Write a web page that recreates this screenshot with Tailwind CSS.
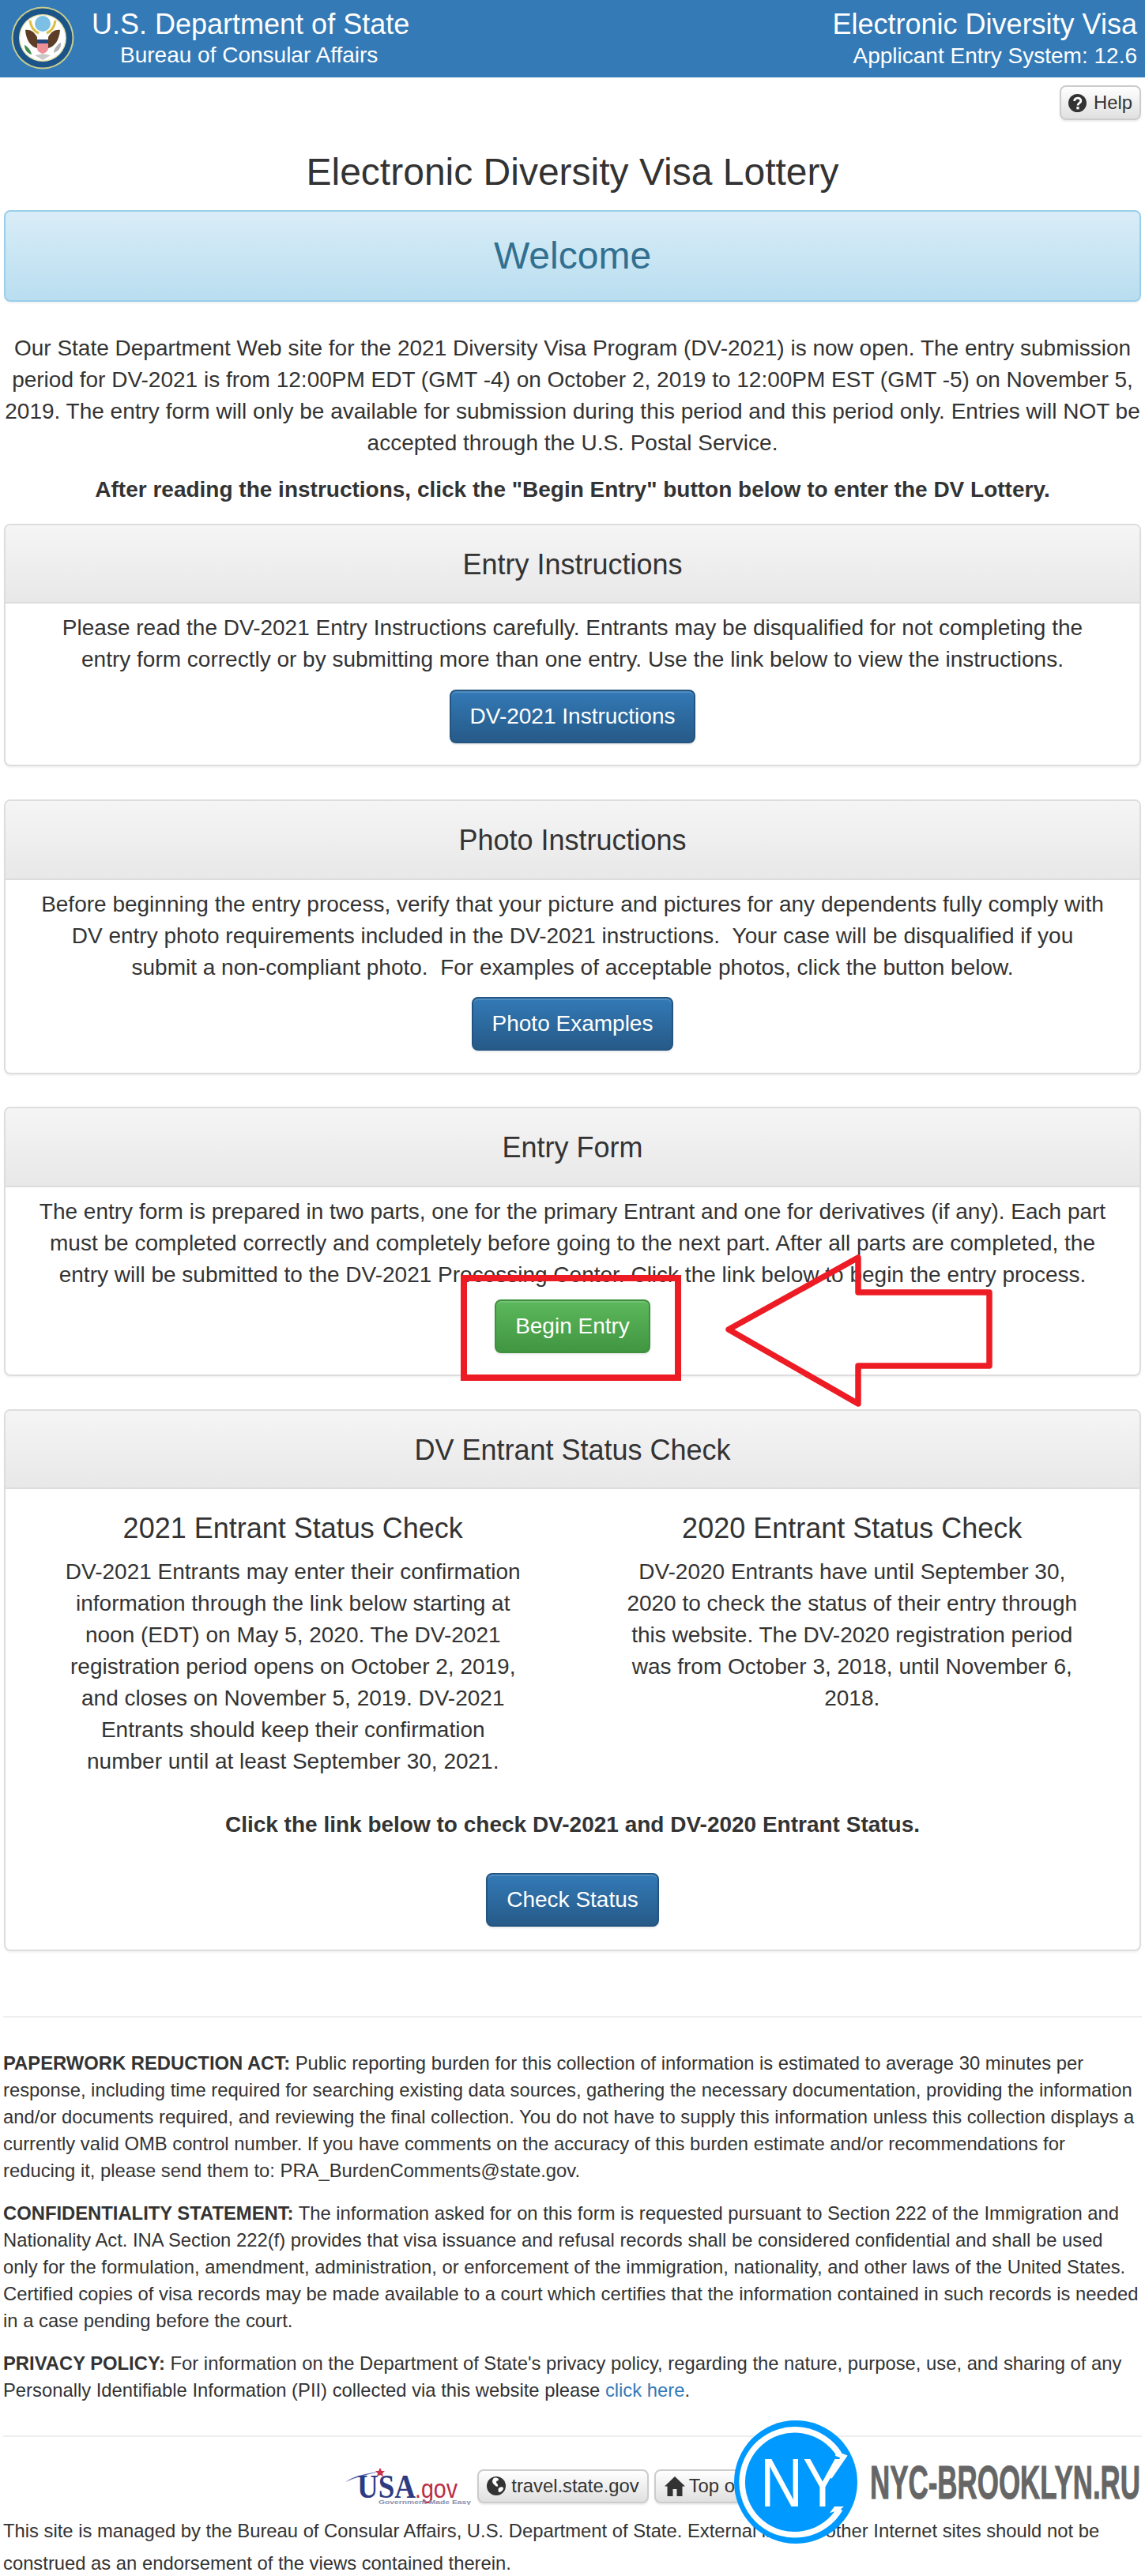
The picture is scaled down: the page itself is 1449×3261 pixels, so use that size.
<!DOCTYPE html>
<html lang="en">
  <head>
    <meta charset="UTF-8" />
    <title>Electronic Diversity Visa Lottery</title>
    <script src="https://cdn.jsdelivr.net/npm/@tailwindcss/browser@4"></script>
  </head>
  <body class="relative h-[3261px] overflow-hidden bg-white font-['Liberation_Sans',Arial,sans-serif] text-[28px] leading-[40px] text-[#333]">
    <!-- top bar -->
    <header class="flex h-[98px] justify-between bg-[#337ab7] text-white">
      <div class="flex">
        <svg class="ml-[14px] mt-[8px] h-[80px] w-[80px]" viewBox="0 0 80 80">
          <circle cx="40" cy="40" r="39.5" fill="#c6cc8e" />
          <circle cx="40" cy="40" r="37.5" fill="#1b5489" />
          <circle cx="40" cy="40" r="30" fill="#e9e3b0" />
          <circle cx="40" cy="40" r="28.5" fill="#fff" />
          <circle cx="40" cy="22" r="10" fill="#7cc0e6" />
          <path d="M24 18c1 8 4 13 11 16M56 18c-1 8-4 13-11 16" fill="none" stroke="#d9bf45" stroke-width="3" />
          <path d="M18 30c6-1 11 2 15 9l0 14c-8-2-14-10-15-23zM62 30c-6-1-11 2-15 9l0 14c8-2 14-10 15-23z" fill="#5d3d26" />
          <path d="M33 42h14v11c0 4-4 6-7 7-3-1-7-3-7-7z" fill="#ef8f98" />
          <path d="M33 42h14v5h-14z" fill="#23477f" />
          <path d="M17 49c3 1 8 6 9 12-5-1-9-6-9-12z" fill="#3f8a4e" />
          <path d="M63 46c-3 1-9 7-9 13 6-2 10-7 9-13z" fill="#b3b3b3" />
          <path d="M30 62l10 6 10-6-10-2z" fill="#c9c9c9" />
        </svg>
        <div class="ml-[22px] pt-[10px]">
          <div class="text-[36px] leading-[42px]">U.S. Department of State</div>
          <div class="ml-[36px] text-[28px] leading-[36px]">Bureau of Consular Affairs</div>
        </div>
      </div>
      <div class="pr-[10px] pt-[10px] text-right">
        <div class="text-[36px] leading-[42px]">Electronic Diversity Visa</div>
        <div class="mt-[1px] text-[28px] leading-[36px]">Applicant Entry System: 12.6</div>
      </div>
    </header>

    <main class="px-[5px]">
      <div class="flex justify-end pt-[10px]">
        <a class="flex h-[44px] w-[103px] items-center justify-center gap-[9px] rounded-[8px] border-2 border-[#ccc] bg-linear-to-b from-white to-[#e0e0e0] text-[23.8px] shadow-[0_2px_2px_rgba(0,0,0,0.08)]">
          <svg class="h-[23px] w-[23px]" viewBox="0 0 24 24">
            <circle cx="12" cy="12" r="12" fill="#333" />
            <path d="M8 9.5c0-5.5 8.500-5.500 8.500-.5 0 3-4 3-4 6.200" fill="none" stroke="#fff" stroke-width="3" />
            <rect x="10.800" y="16.800" width="3.400" height="3.400" fill="#fff" />
          </svg>
          Help
        </a>
      </div>
      <h1 class="mt-[40px] text-center text-[48px] leading-[52px]">Electronic Diversity Visa Lottery</h1>
      <div class="mt-[22px] flex h-[116px] items-center justify-center rounded-[8px] border-2 border-[#9acfea] bg-linear-to-b from-[#d9edf7] to-[#b9def0] text-[48px] text-[#31708f] shadow-[0_2px_2px_rgba(0,0,0,0.05)]">Welcome</div>

      <p class="mt-[39px] text-center">Our State Department Web site for the 2021 Diversity Visa Program (DV-2021) is now open. The entry submission period for DV-2021 is from 12:00PM EDT (GMT -4) on October 2, 2019 to 12:00PM EST (GMT -5) on November 5, 2019. The entry form will only be available for submission during this period and this period only. Entries will NOT be accepted through the U.S. Postal Service.</p>
      <p class="mt-[19px] text-center font-bold">After reading the instructions, click the "Begin Entry" button below to enter the DV Lottery.</p>

      <section class="mt-[23px] h-[307px] rounded-[8px] border-2 border-[#ddd] shadow-[0_2px_2px_rgba(0,0,0,0.05)]">
        <h2 class="flex h-[99px] items-center justify-center rounded-t-[6px] border-b-2 border-[#ddd] bg-linear-to-b from-[#f5f5f5] to-[#e8e8e8] pt-[2px] text-[36px]">Entry Instructions</h2>
        <div class="px-[43px] pt-[11px] text-center">
          <p>Please read the DV-2021 Entry Instructions carefully. Entrants may be disqualified for not completing the entry form correctly or by submitting more than one entry. Use the link below to view the instructions.</p>
          <a class="mt-[18px] inline-block rounded-[8px] border-2 border-[#245580] bg-linear-to-b from-[#337ab7] to-[#265a88] px-[24px] py-[12px] text-white shadow-[inset_0_2px_0_rgba(255,255,255,0.15),0_2px_2px_rgba(0,0,0,0.08)]">DV-2021 Instructions</a>
        </div>
      </section>

      <section class="mt-[42px] h-[348px] rounded-[8px] border-2 border-[#ddd] shadow-[0_2px_2px_rgba(0,0,0,0.05)]">
        <h2 class="flex h-[100px] items-center justify-center rounded-t-[6px] border-b-2 border-[#ddd] bg-linear-to-b from-[#f5f5f5] to-[#e8e8e8] pt-[2px] text-[36px]">Photo Instructions</h2>
        <div class="px-[43px] pt-[11px] text-center">
          <p>Before beginning the entry process, verify that your picture and pictures for any dependents fully comply with DV entry photo requirements included in the DV-2021 instructions. &nbsp;Your case will be disqualified if you submit a non-compliant photo. &nbsp;For examples of acceptable photos, click the button below.</p>
          <a class="mt-[17px] inline-block rounded-[8px] border-2 border-[#245580] bg-linear-to-b from-[#337ab7] to-[#265a88] px-[24px] py-[12px] text-white shadow-[inset_0_2px_0_rgba(255,255,255,0.15),0_2px_2px_rgba(0,0,0,0.08)]">Photo Examples</a>
        </div>
      </section>

      <section class="mt-[41px] h-[341px] rounded-[8px] border-2 border-[#ddd] shadow-[0_2px_2px_rgba(0,0,0,0.05)]">
        <h2 class="flex h-[100px] items-center justify-center rounded-t-[6px] border-b-2 border-[#ddd] bg-linear-to-b from-[#f5f5f5] to-[#e8e8e8] pt-[2px] text-[36px]">Entry Form</h2>
        <div class="px-[38px] pt-[11px] text-center">
          <p>The entry form is prepared in two parts, one for the primary Entrant and one for derivatives (if any). Each part must be completed correctly and completely before going to the next part. After all parts are completed, the entry will be submitted to the DV-2021 Processing Center. Click the link below to begin the entry process.</p>
          <a class="mt-[11px] inline-block rounded-[8px] border-2 border-[#3e8f3e] bg-linear-to-b from-[#5cb85c] to-[#419641] px-[24px] py-[12px] text-white shadow-[inset_0_2px_0_rgba(255,255,255,0.15),0_2px_2px_rgba(0,0,0,0.08)]">Begin Entry</a>
        </div>
      </section>

      <section class="mt-[42px] h-[686px] rounded-[8px] border-2 border-[#ddd] shadow-[0_2px_2px_rgba(0,0,0,0.05)]">
        <h2 class="flex h-[99px] items-center justify-center rounded-t-[6px] border-b-2 border-[#ddd] bg-linear-to-b from-[#f5f5f5] to-[#e8e8e8] pt-[2px] text-[36px]">DV Entrant Status Check</h2>
        <div class="px-[10px] pt-[28px] text-center">
          <div class="grid grid-cols-2">
            <div class="px-[62px]">
              <h3 class="text-[36px] leading-[44px]">2021 Entrant Status Check</h3>
              <p class="mt-[13px]">DV-2021 Entrants may enter their confirmation information through the link below starting at noon (EDT) on May 5, 2020. The DV-2021 registration period opens on October 2, 2019, and closes on November 5, 2019. DV-2021 Entrants should keep their confirmation number until at least September 30, 2021.</p>
            </div>
            <div class="px-[62px]">
              <h3 class="text-[36px] leading-[44px]">2020 Entrant Status Check</h3>
              <p class="mt-[13px]">DV-2020 Entrants have until September 30, 2020 to check the status of their entry through this website. The DV-2020 registration period was from October 3, 2018, until November 6, 2018.</p>
            </div>
          </div>
          <p class="mt-[40px] font-bold">Click the link below to check DV-2021 and DV-2020 Entrant Status.</p>
          <a class="mt-[41px] inline-block rounded-[8px] border-2 border-[#245580] bg-linear-to-b from-[#337ab7] to-[#265a88] px-[24px] py-[12px] text-white shadow-[inset_0_2px_0_rgba(255,255,255,0.15),0_2px_2px_rgba(0,0,0,0.08)]">Check Status</a>
        </div>
      </section>
    </main>

    <footer class="px-[4px] text-[23.8px] leading-[34px]">
      <hr class="mt-[82px] border-t-2 border-[#eee]" />
      <p class="mt-[41px]"><b>PAPERWORK REDUCTION ACT:</b> Public reporting burden for this collection of information is estimated to average 30 minutes per response, including time required for searching existing data sources, gathering the necessary documentation, providing the information and/or documents required, and reviewing the final collection. You do not have to supply this information unless this collection displays a currently valid OMB control number. If you have comments on the accuracy of this burden estimate and/or recommendations for reducing it, please send them to: PRA_BurdenComments@state.gov.</p>
      <p class="mt-[20px]"><b>CONFIDENTIALITY STATEMENT:</b> The information asked for on this form is requested pursuant to Section 222 of the Immigration and Nationality Act. INA Section 222(f) provides that visa issuance and refusal records shall be considered confidential and shall be used only for the formulation, amendment, administration, or enforcement of the immigration, nationality, and other laws of the United States. Certified copies of visa records may be made available to a court which certifies that the information contained in such records is needed in a case pending before the court.</p>
      <p class="mt-[20px]"><b>PRIVACY POLICY:</b> For information on the Department of State's privacy policy, regarding the nature, purpose, use, and sharing of any Personally Identifiable Information (PII) collected via this website please <a class="text-[#337ab7]">click here</a>.</p>
      <hr class="mt-[40px] border-t-2 border-[#eee]" />
      <div class="mt-[38px] flex items-center justify-center gap-[7px]">
        <svg class="h-[48px] w-[160px]" viewBox="0 0 160 48">
          <path d="M0 19C10 12 24 8 44 6C28 9 14 13 0 19z" fill="#5a6ba8" />
          <path d="M44 1l2 4 4 0-3 3 1 4-4-2-4 2 1-4-3-3 4 0z" fill="#c8324a" />
          <text x="15" y="39" font-family="Liberation Serif" font-size="42" font-weight="bold" fill="#2e3b82" textLength="74" lengthAdjust="spacingAndGlyphs">USA</text>
          <text x="88" y="39" font-family="Liberation Sans" font-size="33" fill="#b92c45" textLength="54" lengthAdjust="spacingAndGlyphs">.gov</text>
          <text x="42" y="47" font-family="Liberation Sans" font-size="7" font-weight="bold" fill="#8a90ad" textLength="117" lengthAdjust="spacingAndGlyphs">Government Made Easy</text>
        </svg>
        <a class="flex h-[43px] items-center gap-[7px] rounded-[8px] border-2 border-[#ccc] bg-linear-to-b from-white to-[#e0e0e0] px-[10px] shadow-[0_2px_2px_rgba(0,0,0,0.08)]">
          <svg class="h-[24px] w-[24px]" viewBox="0 0 24 24">
            <circle cx="12" cy="12" r="12" fill="#333" />
            <path d="M9 2c3-1 6 0 6 2s-3 1-3 3 3 3 2 5-3 0-5-2-3-5 0-8zM16 14c2-1 5-1 5 1s-3 5-5 5-2-5 0-6z" fill="#fff" />
          </svg>
          travel.state.gov
        </a>
        <a class="flex h-[43px] items-center gap-[5px] rounded-[8px] border-2 border-[#ccc] bg-linear-to-b from-white to-[#e0e0e0] px-[11px] shadow-[0_2px_2px_rgba(0,0,0,0.08)]">
          <svg class="h-[25px] w-[26px]" viewBox="0 0 26 25">
            <path d="M13 0L26 12.500h-3.500V25H15.500V16h-5v9H3.500V12.500H0z" fill="#333" />
          </svg>
          Top of Page
        </a>
      </div>
      <p class="mt-[12px] leading-[41px]">This site is managed by the Bureau of Consular Affairs, U.S. Department of State. External links to other Internet sites should not be construed as an endorsement of the views contained therein.</p>
    </footer>

    <!-- red markup and watermark drawn over the page -->
    <svg class="pointer-events-none absolute left-0 top-0 h-[3261px] w-[1449px]" viewBox="0 0 1449 3261">
      <rect x="587" y="1618" width="271" height="126" fill="none" stroke="#ed1c24" stroke-width="8" />
      <path d="M1086 1592V1636H1252V1729H1086V1777L922 1683z" fill="none" stroke="#ed1c24" stroke-width="7.500" stroke-linejoin="round" />
      <circle cx="1007" cy="3142" r="78" fill="#0099ff" />
      <path d="M1062 3107A66.500 66.500 0 1 0 1063 3176" fill="none" stroke="#fff" stroke-width="7.500" />
      <path d="M1058 3106L1068 3110L1050 3136" fill="none" stroke="#fff" stroke-width="6" />
      <path d="M1068 3173H1056L1050 3181L1062 3178z" fill="#fff" />
      <text x="962" y="3173" font-family="Liberation Sans" font-size="88" fill="#fff" textLength="104" lengthAdjust="spacingAndGlyphs">NY</text>
      <text x="1101" y="3163" font-family="Liberation Sans" font-size="60" font-weight="bold" fill="#666" stroke="#666" stroke-width="1" textLength="342" lengthAdjust="spacingAndGlyphs">NYC-BROOKLYN.RU</text>
    </svg>
  </body>
</html>
